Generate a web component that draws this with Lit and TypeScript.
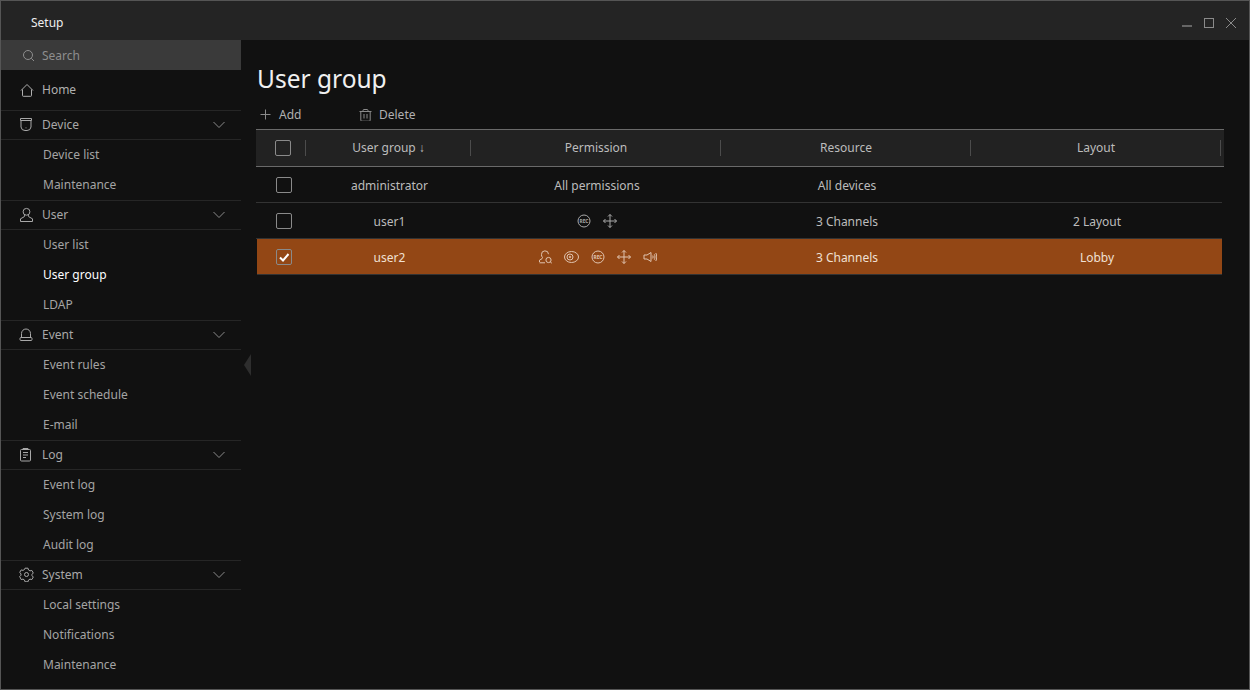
import { LitElement, html, css, svg } from "lit";
import { customElement } from "lit/decorators.js";

const icons: Record<string, unknown> = {
  search: svg`<circle cx="6" cy="6" r="4.500"/><path d="M9.300 9.300 12 12"/>`,
  home: svg`<path d="M1 7.500 7 1.500 13 7.500M2.500 6.500V12.500a.8.8 0 0 0 .8.8h7.400a.8.8 0 0 0 .8-.8V6.500"/>`,
  device: svg`<path d="M1.500 1.500h11v2h-11zM2 3.500v6.500a4 4 0 0 0 4 3.500h2a4 4 0 0 0 4-3.500V3.500"/><path d="M7 10.500v.8"/>`,
  user: svg`<circle cx="7.500" cy="4.800" r="3.400"/><path d="M5.800 8 5.300 9.700 1.500 11.800v2.700h12v-2.700L9.700 9.700 9.200 8"/>`,
  bell: svg`<path d="M2.500 10.500V6.500a4.500 4.500 0 0 1 9 0V10.500"/><rect x="1" y="10.500" width="12" height="3" rx="1"/>`,
  log: svg`<rect x="1.500" y="2.500" width="10" height="11.500" rx="1"/><path d="M4 2.500V1.500h5v1M4 5.500h5M4 8h5M4 10.500h3"/>`,
  gear: svg`<circle cx="7.500" cy="7.500" r="2"/><path d="M6 1.200h3l.5 1.800 1.500.9 1.800-.5 1.500 2.600-1.300 1.300v1.400l1.300 1.300-1.500 2.600-1.800-.5-1.500.9-.5 1.800H6l-.5-1.800-1.500-.9-1.800.5L.7 9.500 2 8.200V6.800L.7 5.500l1.500-2.600 1.800.5 1.500-.9z"/>`,
  chevron: svg`<path d="M.5 1 6 6.500 11.500 1"/>`,
  plus: svg`<path d="M5.500.5v10M.5 5.500h10"/>`,
  trash: svg`<path d="M.5 3.500h12M4 3.500V2.500a1 1 0 0 1 1-1h3a1 1 0 0 1 1 1v1M1.800 3.500v8.700a1 1 0 0 0 1 1h7.400a1 1 0 0 0 1-1V3.500M5 6v4.500M8 6v4.500"/>`,
  check: svg`<path d="M3 7.500 6 10.500 11.500 4" />`,
  rec: svg`<circle cx="7" cy="7" r="6"/><text x="7" y="8.700" text-anchor="middle" font-size="4.800" font-weight="700" font-family="Noto Sans, sans-serif" stroke="none" fill="currentColor">REC</text>`,
  move: svg`<path d="M7 .5v13M.5 7h13M5 2.500 7 .5l2 2M5 11.500l2 2 2-2M2.500 5l-2 2 2 2M11.500 5l2 2-2 2"/>`,
  searchUser: svg`<path d="M1.500 12v-1.800l2.500-1.500.5-1.200A4 4 0 0 1 3.500 4.500a3.500 3.500 0 0 1 7-.3M1.500 12.800H7"/><circle cx="10.500" cy="10" r="2.600"/><path d="m12.400 11.900 1.800 1.800"/>`,
  playback: svg`<ellipse cx="7.500" cy="7" rx="7" ry="5.500"/><circle cx="6" cy="7" r="3"/><circle cx="6" cy="7" r=".8"/>`,
  speaker: svg`<path d="M1 5h3L8 2.500v9L4 9H1zM9.800 5.500c.4 1 .4 2 0 3M11.300 4.300c.9 1.800.9 3.600 0 5.400M12.800 3c1.300 2.600 1.300 5.400 0 8"/>`,
};

const icon = (name: string, size: number, cls = "") =>
  html`<svg class="ic ${cls}" width=${size} height=${size} viewBox="0 0 ${size} ${size}">${icons[name]}</svg>`;

const nav = [
  { label: "Device", icon: "device", items: ["Device list", "Maintenance"] },
  { label: "User", icon: "user", items: ["User list", "User group", "LDAP"] },
  { label: "Event", icon: "bell", items: ["Event rules", "Event schedule", "E-mail"] },
  { label: "Log", icon: "log", items: ["Event log", "System log", "Audit log"] },
  { label: "System", icon: "gear", items: ["Local settings", "Notifications", "Maintenance"] },
];

const rows = [
  { name: "administrator", perm: "All permissions", res: "All devices", layout: "", checked: false, icons: [] as string[] },
  { name: "user1", perm: "", res: "3 Channels", layout: "2 Layout", checked: false, icons: ["rec", "move"] },
  { name: "user2", perm: "", res: "3 Channels", layout: "Lobby", checked: true, icons: ["searchUser", "playback", "rec", "move", "speaker"] },
];

@customElement("app-root")
export class AppRoot extends LitElement {
  static styles = css`
    :host {
      display: block;
      width: 1250px;
      height: 690px;
      font-family: "Noto Sans", sans-serif;
      font-size: 12px;
      color: #c4c4c4;
    }
    * {
      box-sizing: border-box;
    }
    .window {
      width: 1250px;
      height: 690px;
      border: 1px solid #555;
      background: #111;
      display: flex;
      flex-direction: column;
    }
    .ic {
      fill: none;
      stroke: currentColor;
      stroke-width: 1;
      flex: none;
      display: block;
    }
    .titlebar {
      height: 39px;
      flex: none;
      background: #242424;
      display: flex;
      align-items: center;
      padding: 4px 12px 0 30px;
      color: #eee;
    }
    .winbtns {
      margin-left: auto;
      display: flex;
      align-items: center;
      gap: 10px;
      color: #8a8a8a;
    }
    .min {
      color: #666;
    }
    .min path {
      stroke-width: 2;
    }
    .body {
      flex: 1;
      display: flex;
      min-height: 0;
    }
    .side {
      width: 240px;
      flex: none;
    }
    .search {
      height: 30px;
      background: #3a3a3a;
      display: flex;
      align-items: center;
      padding-left: 21px;
      gap: 7px;
      color: #8e8e8e;
    }
    .home {
      height: 40px;
      display: flex;
      align-items: center;
      padding: 0 0 1px 19px;
      gap: 8px;
      color: #b0b0b0;
    }
    .head {
      height: 30px;
      display: flex;
      align-items: center;
      border-top: 1px solid #262626;
      border-bottom: 1px solid #262626;
      padding: 0 0 1px 18px;
      gap: 8px;
      color: #a8a8a8;
    }
    .chev {
      margin-left: auto;
      margin-right: 16px;
      color: #8a8a8a;
    }
    .item {
      height: 30px;
      line-height: 29px;
      padding-left: 42px;
      color: #a4a4a4;
    }
    .item.on {
      color: #fff;
    }
    .handle {
      width: 15px;
      flex: none;
      position: relative;
    }
    .handle::after {
      content: "";
      position: absolute;
      left: 3px;
      top: 314px;
      border-style: solid;
      border-width: 11px 7px 11px 0;
      border-color: transparent #2e2e2e transparent transparent;
    }
    .main {
      flex: 1;
      min-width: 0;
      padding-right: 25px;
    }
    h1 {
      margin: 0;
      height: 59px;
      padding: 19px 0 0 1px;
      font-size: 24.500px;
      font-weight: 400;
      line-height: 40px;
      color: #f0f0f0;
    }
    .tools {
      height: 30px;
      display: flex;
      align-items: center;
      padding-left: 4px;
      color: #b0b0b0;
    }
    .tool {
      display: flex;
      align-items: center;
      gap: 8px;
      width: 99px;
    }
    .tool + .tool {
      gap: 7px;
    }
    .tool .ic {
      color: #8a8a8a;
    }
    .grid {
      display: grid;
      grid-template-columns: 50px 165px 250px 250px 250px 1fr;
      align-items: center;
      text-align: center;
    }
    .thead {
      height: 38px;
      background: #222;
      border-top: 1px solid #6a6a6a;
      border-bottom: 1px solid #6a6a6a;
      padding-bottom: 1px;
      color: #bcbcbc;
    }
    .thead > div {
      border-right: 1px solid #4c4c4c;
      height: 16px;
      line-height: 16px;
      padding-left: 1px;
    }
    .thead > div:last-child {
      border-right: none;
    }
    .tr {
      height: 36px;
      margin-right: 2px;
      padding: 1px 0 0 1px;
      border-bottom: 1px solid #333;
      color: #bcbcbc;
    }
    .tr.sel {
      background: #934715;
      color: #f0e0d4;
      margin-left: 1px;
      padding-left: 0;
    }
    .cb {
      width: 16px;
      height: 16px;
      border: 1px solid #8a8a8a;
      border-radius: 2px;
      margin: 0 auto;
      display: flex;
      align-items: center;
      justify-content: center;
      color: #fff;
    }
    .cb .ic {
      stroke-width: 2;
    }
    .thead .cell-cb {
      padding-left: 5px;
    }
    .cell-cb {
      display: flex;
      padding-left: 3px;
    }
    .perms {
      display: flex;
      justify-content: center;
      align-items: center;
      gap: 12px;
      color: #a8a8a8;
    }
    .sel .perms {
      color: #e0c4b0;
    }
  `;

  render() {
    return html`
      <div class="window">
        <div class="titlebar">
          Setup
          <div class="winbtns">
            <svg class="ic min" width="12" height="12" viewBox="0 0 12 12"><path d="M1 9h10"/></svg>
            <svg class="ic" width="12" height="12" viewBox="0 0 12 12"><rect x="1.500" y="1.500" width="9" height="9"/></svg>
            <svg class="ic" width="12" height="12" viewBox="0 0 12 12"><path d="M1 1l10 10M11 1 1 11"/></svg>
          </div>
        </div>
        <div class="body">
          <div class="side">
            <div class="search">${icon("search", 13)}Search</div>
            <div class="home">${icon("home", 14)}Home</div>
            ${nav.map(
              (g) => html`
                <div class="head">
                  ${icon(g.icon, 15)}${g.label}
                  <svg class="ic chev" width="12" height="8" viewBox="0 0 12 8">${icons.chevron}</svg>
                </div>
                ${g.items.map((i) => html`<div class="item ${i === "User group" ? "on" : ""}">${i}</div>`)}
              `
            )}
          </div>
          <div class="handle"></div>
          <div class="main">
            <h1>User group</h1>
            <div class="tools">
              <div class="tool">${icon("plus", 11)}Add</div>
              <div class="tool">${icon("trash", 13)}Delete</div>
            </div>
            <div class="grid thead">
              <div class="cell-cb"><div class="cb"></div></div>
              <div>User group ↓</div>
              <div>Permission</div>
              <div>Resource</div>
              <div>Layout</div>
              <div></div>
            </div>
            ${rows.map(
              (r) => html`
                <div class="grid tr ${r.checked ? "sel" : ""}">
                  <div class="cell-cb">
                    <div class="cb">${r.checked ? html`<svg class="ic" width="14" height="14" viewBox="0 0 14 14">${icons.check}</svg>` : ""}</div>
                  </div>
                  <div>${r.name}</div>
                  <div>${r.perm || html`<div class="perms">${r.icons.map((n) => icon(n, n === "playback" ? 15 : 14))}</div>`}</div>
                  <div>${r.res}</div>
                  <div>${r.layout}</div>
                </div>
              `
            )}
          </div>
        </div>
      </div>
    `;
  }
}
